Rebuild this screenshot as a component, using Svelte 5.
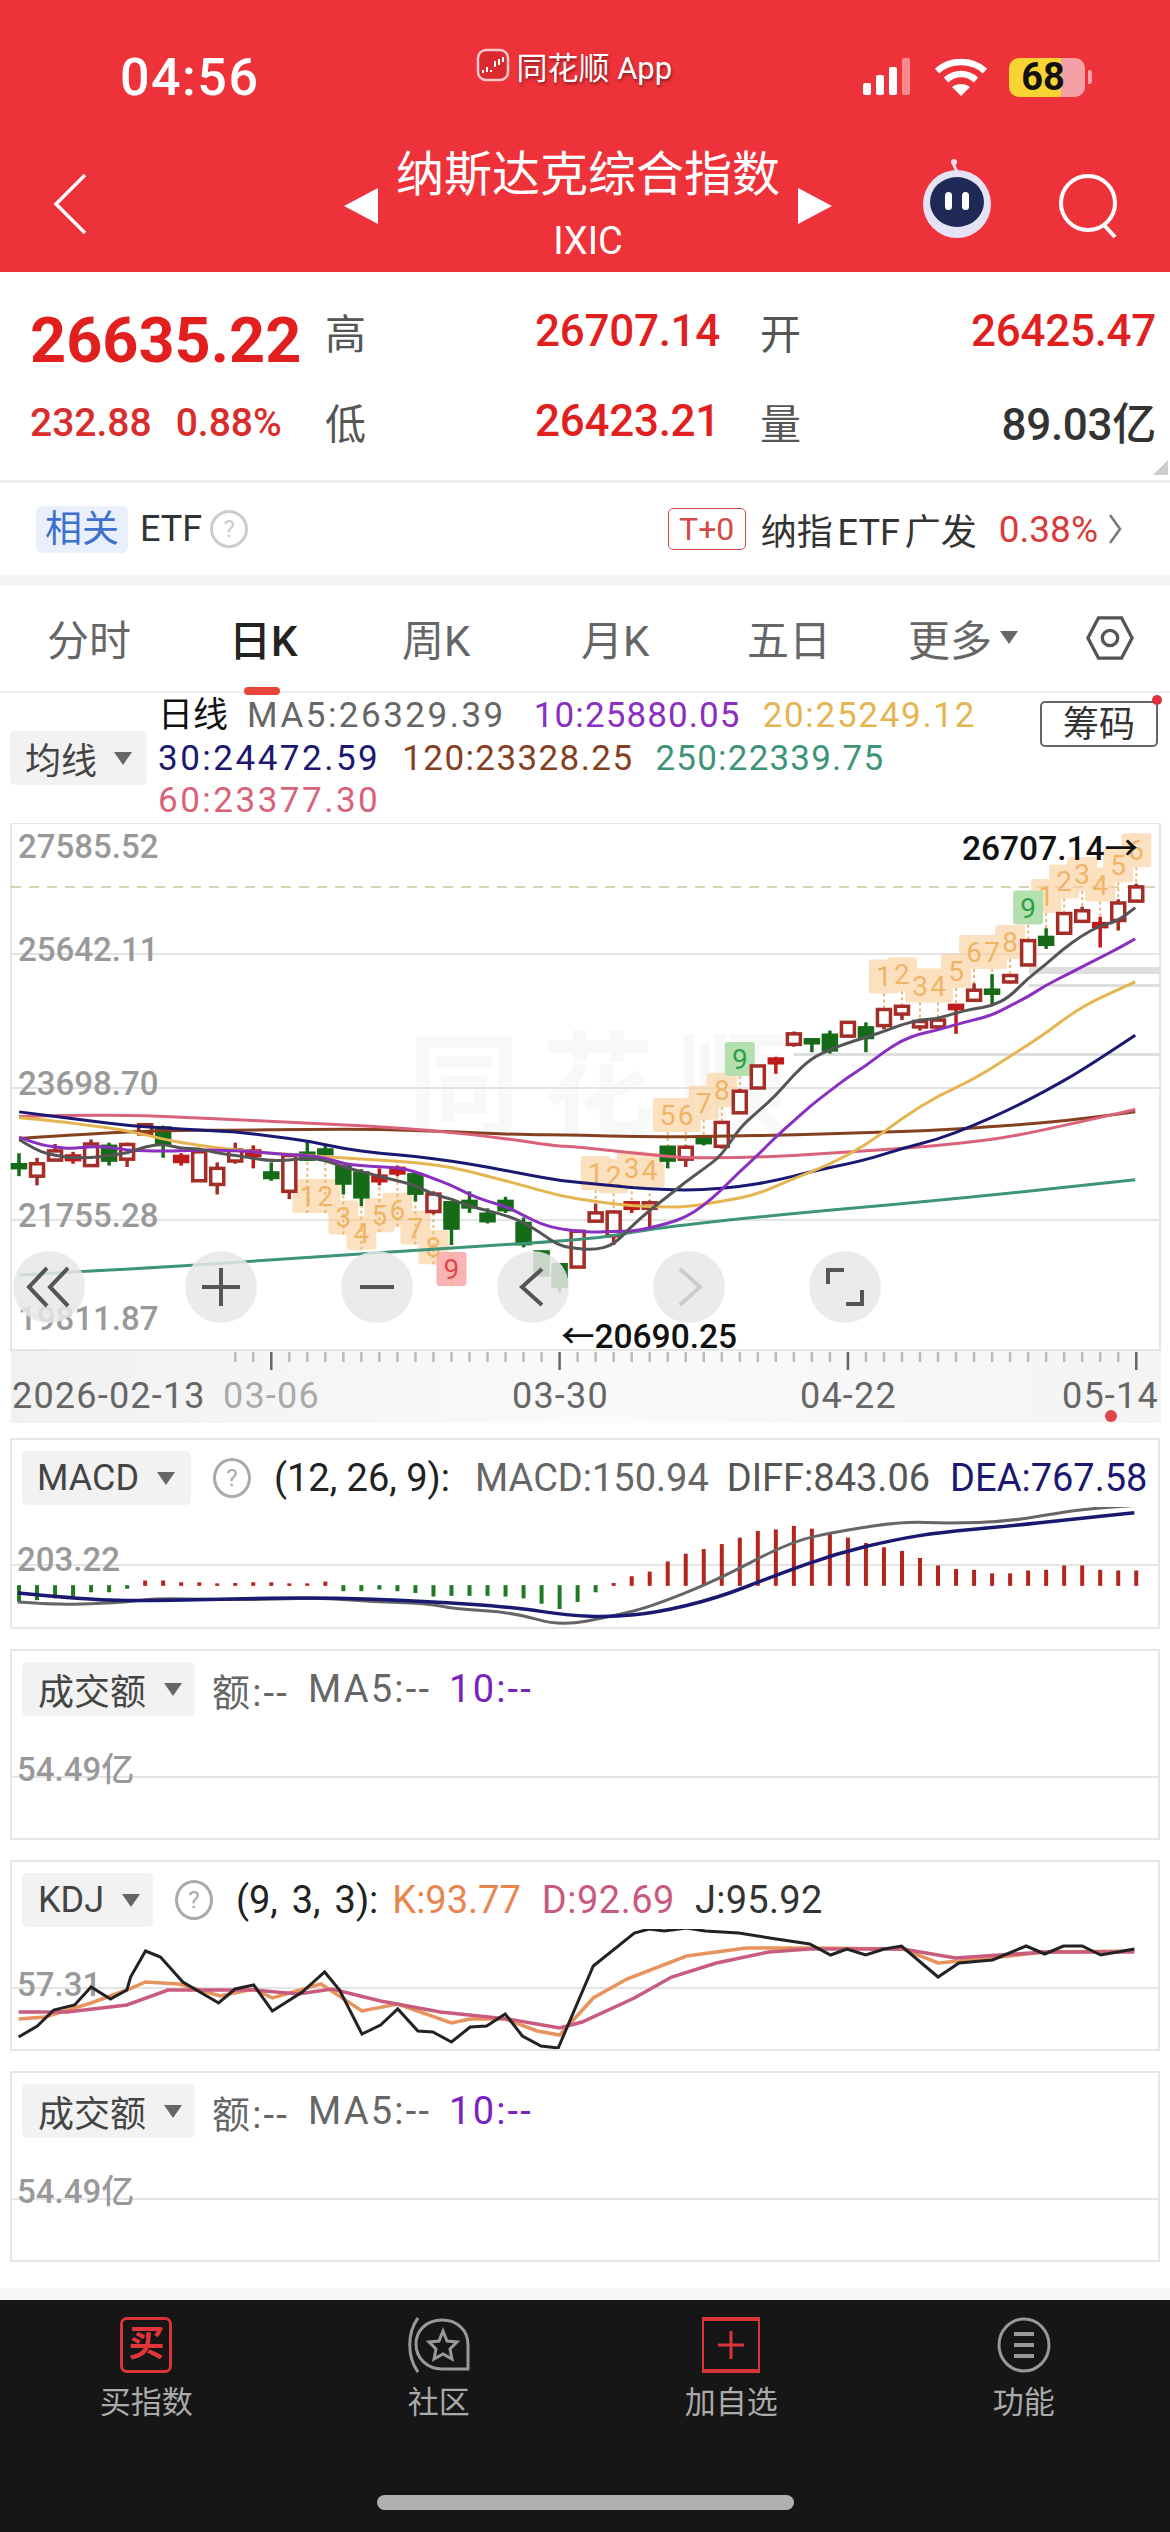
<script>
    // chart geometry was read off the reference; left/right are the two halves of the main chart
    const lx = (x) => x / 2.613;
    const rx = (x) => 570 + x / 2.613;
    const my = (y) => 680 + y / 2.178;
    const cx = (i) => 19 + 18.02 * i;

    function smooth(points) {
        let d = `M${points[0][0]} ${points[0][1]}`;
        for (let i = 1; i < points.length - 1; i++) {
            const mx = (points[i][0] + points[i + 1][0]) / 2;
            const mz = (points[i][1] + points[i + 1][1]) / 2;
            d += ` Q${points[i][0]} ${points[i][1]} ${mx} ${mz}`;
        }
        const last = points[points.length - 1];
        return d + ` L${last[0]} ${last[1]}`;
    }

    const mainLine = (left, right) =>
        smooth([
            ...left.map(([x, y]) => [lx(x), my(y)]),
            ...right.map(([x, y]) => [rx(x), my(y)])
        ]);

    const candles = [
        ['g', 1035, 1060, 1066, 1085], ['r', 1045, 1058, 1085, 1105], ['r', 1015, 1030, 1050, 1052],
        ['s', 1032, 1041, 1049, 1058], ['r', 1005, 1015, 1062, 1065], ['g', 1012, 1020, 1050, 1062],
        ['r', 1012, 1016, 1048, 1065], ['r', 970, 973, 993, 995], ['g', 975, 980, 1015, 1045],
        ['s', 1035, 1042, 1053, 1062], ['r', 1030, 1032, 1095, 1097], ['r', 1055, 1068, 1103, 1125],
        ['r', 1012, 1028, 1052, 1058], ['s', 1018, 1030, 1040, 1068], ['g', 1055, 1078, 1088, 1095],
        ['r', 1035, 1040, 1118, 1135], ['g', 1010, 1035, 1048, 1052], ['g', 1015, 1028, 1036, 1052],
        ['g', 1062, 1065, 1100, 1125], ['g', 1070, 1078, 1130, 1150], ['s', 1068, 1085, 1095, 1105],
        ['s', 1062, 1068, 1078, 1085], ['g', 1078, 1082, 1122, 1140], ['r', 1118, 1124, 1162, 1168],
        ['g', 1143, 1143, 1198, 1235], ['g', 1118, 1140, 1152, 1165], ['g', 1155, 1168, 1182, 1188],
        ['g', 1130, 1140, 1158, 1165], ['g', 1175, 1188, 1232, 1240], ['g', 1250, 1250, 1300, 1305],
        ['g', 1275, 1278, 1325, 1338], ['r', 1205, 1205, 1283, 1285], ['r', 1145, 1165, 1183, 1186],
        ['r', 1160, 1163, 1215, 1235], ['s', 1140, 1143, 1155, 1165], ['r', 1138, 1143, 1155, 1200],
        ['g', 1020, 1022, 1050, 1068], ['r', 1018, 1022, 1048, 1065], ['g', 1000, 1003, 1012, 1018],
        ['r', 965, 968, 1020, 1025], ['r', 895, 900, 947, 950], ['r', 843, 845, 893, 895],
        ['s', 825, 830, 838, 862], ['r', 770, 775, 798, 803], ['g', 785, 788, 792, 815],
        ['g', 768, 778, 810, 818], ['r', 748, 750, 780, 783], ['g', 750, 762, 783, 815],
        ['r', 720, 722, 757, 765], ['r', 712, 715, 732, 745], ['r', 742, 748, 760, 768],
        ['r', 740, 745, 760, 768], ['s', 710, 713, 720, 775], ['r', 665, 680, 702, 705],
        ['g', 645, 680, 686, 710], ['r', 645, 648, 662, 665], ['r', 570, 572, 625, 628],
        ['g', 545, 565, 580, 590], ['r', 510, 513, 556, 558], ['r', 498, 507, 530, 532],
        ['s', 520, 535, 540, 587], ['r', 482, 490, 528, 550], ['r', 448, 455, 486, 488]
    ];

    const candleFill = { r: '#fff', s: '#c01a1a', g: '#156b18' };
    const candleStroke = { r: '#a52d27', s: '#c01a1a', g: '#156b18' };

    // TD sequence markers: index of the candle, digit, y
    const markers = [
        [16, 1, 1128], [17, 2, 1128], [18, 3, 1175], [19, 4, 1208], [20, 5, 1170], [21, 6, 1158], [22, 7, 1197], [23, 8, 1240], [24, 9, 1287, 'sell'],
        [32, 1, 1078], [33, 2, 1085], [34, 3, 1068], [35, 4, 1072], [36, 5, 952], [37, 6, 952], [38, 7, 925], [39, 8, 897], [40, 9, 830, 'buy'],
        [48, 1, 650], [49, 2, 645], [50, 3, 670], [51, 4, 670], [52, 5, 638], [53, 6, 597], [54, 7, 597], [55, 8, 575], [56, 9, 500, 'buy'],
        [57, 1, 475], [58, 2, 443], [59, 3, 427], [60, 4, 450], [61, 5, 408], [62, 6, 375]
    ];
    const plainMarkers = markers.filter((m) => !m[3]);
    const nineMarkers = markers.filter((m) => m[3]);
    const markerFill = { sell: '#f8b4b4', buy: '#b4e0b0' };
    const markerText = { sell: '#e0474c', buy: '#2f9e44' };

    const ma5 = mainLine(
        [[50, 1005], [97, 1030], [145, 1040], [190, 1045], [238, 1045], [285, 1040], [333, 1035], [380, 1020], [427, 1015], [473, 1025], [520, 1025], [568, 1035], [615, 1040], [708, 1052], [756, 1050], [803, 1045], [850, 1050], [897, 1065], [944, 1075], [991, 1085], [1038, 1095], [1085, 1105], [1132, 1125], [1180, 1135], [1226, 1150], [1273, 1160], [1320, 1170], [1367, 1185], [1415, 1210], [1462, 1237], [1509, 1243]],
        [[66, 1245], [113, 1235], [160, 1195], [207, 1160], [254, 1130], [301, 1098], [348, 1070], [396, 1040], [443, 980], [490, 945], [537, 910], [584, 865], [631, 828], [678, 810], [725, 795], [772, 783], [819, 770], [866, 755], [913, 745], [960, 742], [1007, 730], [1054, 720], [1101, 715], [1148, 695], [1195, 655], [1242, 625], [1289, 590], [1336, 562], [1383, 540], [1430, 530], [1477, 500]]
    );
    const ma10 = mainLine(
        [[50, 1000], [97, 1015], [145, 1022], [190, 1025], [238, 1020], [285, 1022], [333, 1028], [380, 1030], [427, 1030], [473, 1030], [520, 1028], [568, 1028], [615, 1030], [662, 1032], [708, 1035], [756, 1038], [803, 1040], [850, 1045], [897, 1058], [944, 1062], [991, 1065], [1038, 1066], [1085, 1075], [1132, 1090], [1180, 1105], [1226, 1125], [1273, 1140], [1320, 1150], [1367, 1170], [1415, 1190], [1462, 1200], [1509, 1205]],
        [[66, 1207], [113, 1205], [160, 1205], [207, 1198], [254, 1188], [301, 1175], [348, 1150], [396, 1115], [443, 1075], [490, 1040], [537, 1000], [584, 965], [631, 930], [678, 900], [725, 870], [772, 845], [819, 815], [866, 790], [913, 775], [960, 767], [1007, 755], [1054, 745], [1101, 735], [1148, 715], [1195, 695], [1242, 670], [1289, 650], [1336, 630], [1383, 610], [1430, 590], [1477, 568]]
    );
    const ma20 = mainLine(
        [[50, 958], [145, 965], [238, 975], [333, 985], [427, 1005], [520, 1018], [615, 1028], [708, 1035], [803, 1040], [897, 1045], [991, 1050], [1085, 1055], [1180, 1065], [1273, 1085], [1367, 1105], [1462, 1128]],
        [[66, 1140], [160, 1150], [254, 1152], [301, 1152], [396, 1140], [490, 1125], [584, 1090], [678, 1060], [772, 1018], [866, 960], [960, 910], [1054, 875], [1148, 825], [1242, 775], [1336, 715], [1477, 662]]
    );
    const ma30 = mainLine(
        [[50, 945], [145, 955], [238, 965], [333, 975], [427, 980], [520, 985], [615, 988], [708, 998], [803, 1008], [897, 1025], [991, 1035], [1085, 1042], [1180, 1052], [1273, 1065], [1367, 1080], [1462, 1095]],
        [[66, 1102], [160, 1110], [254, 1115], [348, 1115], [443, 1108], [537, 1095], [631, 1075], [772, 1050], [866, 1025], [960, 1005], [1054, 975], [1148, 940], [1242, 900], [1336, 855], [1477, 778]]
    );
    const ma60 = mainLine(
        [[50, 955], [190, 952], [380, 953], [570, 960], [756, 968], [944, 975], [1132, 985], [1320, 1003], [1462, 1020]],
        [[0, 1020], [113, 1030], [207, 1038], [301, 1045], [443, 1045], [584, 1040], [725, 1032], [866, 1025], [1007, 1015], [1148, 1000], [1289, 975], [1477, 940]]
    );
    const ma120 = mainLine(
        [[50, 1003], [238, 993], [427, 985], [615, 985], [803, 983], [991, 983], [1180, 988], [1367, 995]],
        [[0, 995], [207, 1000], [396, 998], [584, 995], [772, 990], [960, 985], [1148, 975], [1289, 965], [1477, 945]]
    );
    const ma250 = mainLine(
        [[50, 1300], [400, 1285], [800, 1262], [1200, 1240]],
        [[66, 1222], [207, 1200], [470, 1175], [1000, 1135], [1477, 1093]]
    );
    const maLines = [
        [ma250, '#3e9478'], [ma120, '#85401f'], [ma60, '#d9627a'], [ma30, '#1a1870'],
        [ma20, '#e5b552'], [ma10, '#8a2fc0'], [ma5, '#555']
    ];

    const ticks = Array.from({ length: 51 }, (_, n) => n + 12);
    const longTicks = [14, 30, 46, 62];

    // MACD: top of each bar, in the units of the crop (y / 2.8)
    const macdTops = [515, 510, 505, 500, 488, 488, 478, 455, 455, 460, 460, 463, 462, 460, 460, 463, 463, 458, 485, 485, 480, 485, 490, 500, 498, 498, 498, 500, 505, 520, 535, 515, 488, 462, 443, 430, 402, 380, 367, 353, 335, 316, 312, 302, 310, 325, 335, 350, 362, 372, 392, 413, 423, 425, 435, 435, 427, 425, 413, 413, 425, 427, 427];
    const my4 = (y) => 1420 + y / 2.8;
    const isUp = (i) => (i > 6 && i < 18) || i > 32;
    const mline = (list) => smooth(list.map(([x, y]) => [x / 1.34, my4(y)]));
    const diff = mline([[24, 515], [60, 520], [100, 522], [170, 515], [210, 505], [290, 508], [370, 508], [430, 503], [500, 515], [570, 518], [610, 535], [690, 545], [750, 583], [820, 555], [870, 530], [960, 455], [1060, 345], [1130, 315], [1210, 290], [1270, 295], [1350, 290], [1430, 262], [1470, 252], [1520, 245]]);
    const dea = mline([[24, 490], [100, 505], [170, 513], [290, 507], [430, 502], [570, 513], [690, 530], [760, 553], [820, 557], [880, 545], [960, 505], [1040, 440], [1120, 380], [1200, 340], [1260, 320], [1350, 303], [1430, 285], [1520, 265]]);

    const kdjLine = (list) => list.map(([x, y]) => `${x / 1.34},${y}`).join(' ');
    const jLine = kdjLine([[25, 2037], [50, 2026], [72, 2010], [100, 2005], [122, 1987], [148, 1999], [170, 1990], [175, 1977], [195, 1951], [215, 1957], [245, 1982], [293, 2003], [315, 1989], [340, 1985], [365, 2011], [405, 1992], [435, 1972], [455, 1990], [485, 2034], [510, 2025], [533, 2009], [560, 2031], [580, 2032], [605, 2042], [630, 2027], [652, 2026], [677, 2014], [700, 2036], [725, 2046], [748, 2048], [795, 1966], [850, 1933], [870, 1929], [890, 1931], [920, 1928], [945, 1931], [990, 1933], [1040, 1939], [1085, 1944], [1113, 1955], [1135, 1949], [1160, 1955], [1185, 1949], [1208, 1946], [1257, 1977], [1285, 1963], [1330, 1960], [1375, 1946], [1400, 1954], [1425, 1946], [1450, 1946], [1475, 1955], [1520, 1949]]);
    const kLine = kdjLine([[25, 2019], [60, 2017], [122, 2003], [170, 1990], [195, 1982], [240, 1984], [295, 1996], [340, 1989], [365, 1998], [430, 1984], [485, 2011], [533, 2004], [605, 2023], [630, 2019], [677, 2019], [720, 2031], [750, 2035], [795, 1998], [840, 1979], [920, 1956], [1000, 1948], [1085, 1948], [1210, 1949], [1257, 1963], [1330, 1958], [1400, 1952], [1520, 1951]]);
    const dLine = kdjLine([[25, 2012], [90, 2012], [170, 2005], [225, 1990], [270, 1990], [340, 1990], [400, 1994], [445, 1989], [510, 2001], [590, 2012], [680, 2019], [750, 2028], [780, 2022], [850, 1998], [900, 1977], [960, 1963], [1030, 1952], [1085, 1949], [1210, 1949], [1280, 1958], [1400, 1952], [1520, 1952]]);

    const tabs = ['分时', '日K', '周K', '月K', '五日'];
</script>

{#snippet help()}
    <span class="help">?</span>
{/snippet}

{#snippet chip(label, cls)}
    <div class="chip {cls}"><span>{label}</span><i class="tri"></i></div>
{/snippet}

{#snippet volumePanel(top)}
    <section class="panel vol">
        <div class="panel-head">
            {@render chip('成交额', 'chip-vol')}
            <span class="info vol-a">额:--</span>
            <span class="info vol-b">MA5:--</span>
            <span class="info vol-c">10:--</span>
        </div>
        <svg width="1150" height="110" viewBox="10 {top} 1150 110">
            <line x1="10" x2="1160" y1={top + 59} y2={top + 59} class="grid" />
            <text x="17" y={top + 63} class="axis">54.49亿</text>
        </svg>
    </section>
{/snippet}

<div class="page">
    <header class="top">
        <div class="status">
            <span class="time">04:56</span>
            <div class="app-name">
                <svg width="34" height="34" viewBox="0 0 34 34">
                    <rect x="2" y="2" width="30" height="30" rx="8" fill="#d92a30" stroke="#f7c9c9" stroke-width="2.5" />
                    <path d="M7 22v3M11 19v5M15 22v2M19 13v6M23 11v6M27 9v5" stroke="#fff" stroke-width="2" />
                </svg>
                <span>同花顺 App</span>
            </div>
            <div class="status-icons">
                <svg width="52" height="40" viewBox="0 0 52 40">
                    <rect x="0" y="26" width="8" height="12" rx="2" fill="#fff" />
                    <rect x="13" y="18" width="8" height="20" rx="2" fill="#fff" />
                    <rect x="26" y="10" width="8" height="28" rx="2" fill="#fff" />
                    <rect x="39" y="1" width="8" height="37" rx="2" fill="#f58a8e" />
                </svg>
                <svg class="wifi" width="52" height="40" viewBox="0 0 52 40">
                    <path d="M2 14C15 2 37 2 50 14" fill="none" stroke="#fff" stroke-width="6.5" />
                    <path d="M11 23C20 15 32 15 41 23" fill="none" stroke="#fff" stroke-width="6.5" />
                    <path d="M26 39L17 30C22 26 30 26 35 30Z" fill="#fff" />
                </svg>
                <div class="battery"><span>68</span></div>
                <i class="battery-cap"></i>
            </div>
        </div>
        <div class="nav">
            <svg class="back" width="36" height="62" viewBox="0 0 36 62">
                <path d="M33 2L4 31L33 60" fill="none" stroke="#fff" stroke-width="3.5" />
            </svg>
            <div class="title-wrap">
                <i class="arrow arrow-l"></i>
                <div class="title">
                    <div class="name">纳斯达克综合指数</div>
                    <div class="code">IXIC</div>
                </div>
                <i class="arrow arrow-r"></i>
            </div>
            <svg class="robot" width="76" height="82" viewBox="0 0 76 82">
                <path d="M38 14C36 8 33 6 35 3" fill="none" stroke="#eadff5" stroke-width="3" />
                <circle cx="35" cy="4" r="3" fill="#eadff5" />
                <circle cx="38" cy="46" r="34" fill="#e6e2f6" />
                <ellipse cx="38" cy="44" rx="27" ry="25" fill="#1e2a55" />
                <rect x="26" y="34" width="7" height="18" rx="3.5" fill="#fff" />
                <rect x="43" y="34" width="7" height="18" rx="3.5" fill="#fff" />
            </svg>
            <svg class="search" width="62" height="66" viewBox="0 0 62 66">
                <circle cx="31" cy="30" r="27" fill="none" stroke="#fff" stroke-width="4" />
                <path d="M47 52L58 64" stroke="#fff" stroke-width="4" />
            </svg>
        </div>
    </header>

    <section class="quote">
        <div class="last">
            <div class="price">26635.22</div>
            <div class="change"><span>232.88</span><span>0.88%</span></div>
        </div>
        <div class="stats">
            <span class="label">高</span><b class="value">26707.14</b>
            <span class="label l2">开</span><b class="value">26425.47</b>
            <span class="label">低</span><b class="value">26423.21</b>
            <span class="label l2">量</span><b class="value dark">89.03亿</b>
        </div>
        <i class="corner"></i>
    </section>

    <section class="etf">
        <span class="related">相关</span>
        <span class="etf-name">ETF</span>
        <span class="help etf-help">?</span>
        <span class="spring"></span>
        <span class="t0">T+0</span>
        <span class="fund">纳指 ETF 广发</span>
        <span class="fund-pct">0.38%</span>
        <svg width="14" height="32" viewBox="0 0 14 32">
            <path d="M2 2L12 16L2 30" fill="none" stroke="#777" stroke-width="2.5" />
        </svg>
    </section>

    <div class="band"></div>

    <nav class="tabs">
        {#each tabs as tab, i}
            <div class="tab" class:active={i === 1}>{tab}</div>
        {/each}
        <div class="tab more">更多<i class="tri"></i></div>
        <svg width="50" height="46" viewBox="0 0 50 46">
            <path d="M13 2H37L48 23L37 44H13L2 23Z" fill="none" stroke="#555" stroke-width="3.5" />
            <circle cx="25" cy="23" r="8" fill="none" stroke="#555" stroke-width="3.5" />
        </svg>
    </nav>

    <section class="legend">
        {@render chip('均线', 'chip-ma')}
        <div class="ma-rows">
            <div class="ma-row">
                <span class="day">日线</span>
                <span class="c-5">MA5:26329.39</span>
                <span class="c-10">10:25880.05</span>
                <span class="c-20">20:25249.12</span>
            </div>
            <div class="ma-row">
                <span class="c-30">30:24472.59</span>
                <span class="c-120">120:23328.25</span>
                <span class="c-250">250:22339.75</span>
            </div>
            <div class="ma-row">
                <span class="c-60">60:23377.30</span>
            </div>
        </div>
        <div class="chips-btn">筹码<i class="dot"></i></div>
    </section>

    <section class="main-chart">
        <svg width="1170" height="600" viewBox="0 825 1170 600">
            <defs>
                <linearGradient id="axisBg" x1="0" x2="1" y1="0" y2="0">
                    <stop offset="0" stop-color="#f1f1f1" />
                    <stop offset="0.5" stop-color="#fafafa" />
                    <stop offset="1" stop-color="#f4f4f4" />
                </linearGradient>
            </defs>
            <rect x="11" y="1352" width="1150" height="73" fill="url(#axisBg)" />
            <rect x="11" y="825" width="1149" height="527" fill="#fff" stroke="#e6e6e6" stroke-width="2" />
            <text x="408" y="1128" class="watermark">同花顺</text>

            <line x1="11" x2="1160" y1="956" y2="956" class="grid" />
            <line x1="11" x2="1160" y1="1090" y2="1090" class="grid" />
            <line x1="11" x2="1160" y1="1222" y2="1222" class="grid" />
            <line x1="11" x2="1160" y1="889" y2="889" class="dash" />
            <rect x="1029" y="969" width="131" height="7" fill="#dedede" />
            <rect x="1029" y="986" width="131" height="3" fill="#dedede" />
            <rect x="794" y="1055" width="366" height="3" fill="#dedede" />

            <text x="18" y="860" class="axis">27585.52</text>
            <text x="18" y="963" class="axis">25642.11</text>
            <text x="18" y="1097" class="axis">23698.70</text>
            <text x="18" y="1229" class="axis">21755.28</text>
            <text x="18" y="1332" class="axis">19811.87</text>

            <g opacity="0.62">
                {#each plainMarkers as [i, , y]}
                    <rect x={cx(i) - 15} y={my(y) - 17} width="30" height="34" rx="3" fill="#fbd09a" />
                {/each}
            </g>
            {#each nineMarkers as [i, , y, kind]}
                <rect x={cx(i) - 15} y={my(y) - 17} width="30" height="34" rx="3" fill={markerFill[kind]} />
            {/each}
            {#each markers as [i, digit, y, kind]}
                <line x1={cx(i)} x2={cx(i)} y1={my(y) + 17} y2={my(candles[i][1])} class="td-link" />
                <text x={cx(i)} y={my(y) + 10} class="td" fill={kind ? markerText[kind] : '#efb466'}>{digit}</text>
            {/each}

            {#each candles as [kind, hi, top, bottom, lo], i}
                <line x1={cx(i)} x2={cx(i)} y1={my(hi)} y2={my(lo)} stroke={candleStroke[kind]} stroke-width="3.5" />
                <rect x={cx(i) - 6.5} y={my(top)} width="13" height={Math.max(my(bottom) - my(top), 3)} fill={candleFill[kind]} stroke={candleStroke[kind]} stroke-width="3.5" />
            {/each}

            {#each maLines as [d, color]}
                <path {d} fill="none" stroke={color} stroke-width="3" />
            {/each}

            <text x="561" y="1350" class="mark">←20690.25</text>
            <text x="962" y="862" class="mark">26707.14→</text>

            {#each ticks as i}
                <line x1={cx(i)} x2={cx(i)} y1="1354" y2={longTicks.includes(i) ? 1372 : 1364} stroke={longTicks.includes(i) ? '#666' : '#bbb'} stroke-width="2.5" />
            {/each}
            <text x="12" y="1410" class="date">2026-02-13</text>
            <text x="223" y="1410" class="date faint">03-06</text>
            <text x="512" y="1410" class="date">03-30</text>
            <text x="800" y="1410" class="date">04-22</text>
            <text x="1062" y="1410" class="date">05-14</text>
            <circle cx="1111" cy="1418" r="6" fill="#e0474c" />
        </svg>

        <div class="controls">
            <button class="ctl" aria-label="快退">
                <svg width="46" height="46" viewBox="0 0 46 46"><path d="M21 4L3 23L21 42M42 4L24 23L42 42" fill="none" stroke="#555" stroke-width="4" /></svg>
            </button>
            <button class="ctl" aria-label="放大">
                <svg width="46" height="46" viewBox="0 0 46 46"><path d="M23 4V42M4 23H42" fill="none" stroke="#555" stroke-width="4" /></svg>
            </button>
            <button class="ctl" aria-label="缩小">
                <svg width="46" height="46" viewBox="0 0 46 46"><path d="M6 23H40" fill="none" stroke="#555" stroke-width="4" /></svg>
            </button>
            <button class="ctl" aria-label="左移">
                <svg width="46" height="46" viewBox="0 0 46 46"><path d="M32 5L12 23L32 41" fill="none" stroke="#555" stroke-width="4" /></svg>
            </button>
            <button class="ctl" aria-label="右移">
                <svg width="46" height="46" viewBox="0 0 46 46"><path d="M14 5L34 23L14 41" fill="none" stroke="#ccc" stroke-width="4" /></svg>
            </button>
            <button class="ctl" aria-label="全屏">
                <svg width="46" height="46" viewBox="0 0 46 46"><path d="M22 6H6V20M24 40H40V26" fill="none" stroke="#555" stroke-width="4" /></svg>
            </button>
        </div>
    </section>

    <section class="panel macd">
        <div class="panel-head">
            {@render chip('MACD', 'chip-macd')}
            {@render help()}
            <span class="info params">(12, 26, 9):</span>
            <span class="info m-a">MACD:150.94</span>
            <span class="info m-b">DIFF:843.06</span>
            <span class="info m-c">DEA:767.58</span>
        </div>
        <svg width="1150" height="122" viewBox="10 1509 1150 122">
            <line x1="10" x2="1160" y1="1567" y2="1567" class="grid" />
            <text x="17" y="1573" class="axis">203.22</text>
            {#each macdTops as top, i}
                <line x1={cx(i)} x2={cx(i)} y1={isUp(i) ? my4(top) : my4(468)} y2={isUp(i) ? my4(470) : my4(top)} stroke={isUp(i) ? '#b3261e' : '#1f7a22'} stroke-width="4" />
            {/each}
            <path d={diff} fill="none" stroke="#666" stroke-width="3" />
            <path d={dea} fill="none" stroke="#1a1870" stroke-width="3.5" />
        </svg>
    </section>

    {@render volumePanel(1730)}

    <section class="panel kdj">
        <div class="panel-head">
            {@render chip('KDJ', 'chip-kdj')}
            {@render help()}
            <span class="info params">(9, 3, 3):</span>
            <span class="info k">K:93.77</span>
            <span class="info d">D:92.69</span>
            <span class="info j">J:95.92</span>
        </div>
        <svg width="1150" height="122" viewBox="10 1929 1150 122">
            <line x1="10" x2="1160" y1="1988" y2="1988" class="grid" />
            <text x="17" y="1996" class="axis">57.31</text>
            <polyline points={kLine} fill="none" stroke="#e8925e" stroke-width="3.5" />
            <polyline points={dLine} fill="none" stroke="#c95c7c" stroke-width="3.5" />
            <polyline points={jLine} fill="none" stroke="#222" stroke-width="3" />
        </svg>
    </section>

    {@render volumePanel(2150)}

    <div class="band low"></div>

    <footer class="dock">
        <div class="dock-tabs">
            <div class="dock-item">
                <div class="buy-icon"><span>买</span></div>
                <span>买指数</span>
            </div>
            <div class="dock-item">
                <svg width="62" height="56" viewBox="0 0 62 56">
                    <path d="M10 1C-1 16 -1 40 10 55" fill="none" stroke="#999" stroke-width="3" />
                    <path d="M34 3C18 3 8 14 8 27C8 42 20 52 34 52H60V28C60 13 49 3 34 3Z" fill="none" stroke="#999" stroke-width="3" />
                    <path d="M35 14L39 24L49 25L42 32L44 42L35 37L26 42L28 32L21 25L31 24Z" fill="none" stroke="#999" stroke-width="3" />
                </svg>
                <span>社区</span>
            </div>
            <div class="dock-item">
                <div class="add-icon">
                    <svg width="30" height="32" viewBox="0 0 30 32"><path d="M15 2V30M2 16H28" fill="none" stroke="#d8343a" stroke-width="3" /></svg>
                </div>
                <span>加自选</span>
            </div>
            <div class="dock-item">
                <svg width="56" height="56" viewBox="0 0 56 56">
                    <ellipse cx="28" cy="28" rx="25" ry="26" fill="none" stroke="#999" stroke-width="3" />
                    <path d="M18 17H38M18 28H38M18 39H38" fill="none" stroke="#999" stroke-width="4" />
                </svg>
                <span>功能</span>
            </div>
        </div>
        <div class="home-bar"></div>
    </footer>
</div>

<style>
    :global(body) {
        margin: 0;
        background: #fff;
    }

    .page {
        width: 1170px;
        height: 2532px;
        overflow: hidden;
        display: flex;
        flex-direction: column;
        font-family: Roboto, "Noto Sans CJK SC", sans-serif;
        color: #333;
    }

    .top {
        height: 272px;
        flex: none;
        background: #ee3239;
        color: #fff;
    }

    .status {
        height: 120px;
        display: flex;
        align-items: center;
        position: relative;
        padding: 34px 0 0 120px;
        box-sizing: border-box;
    }

    .time {
        font-size: 52px;
        font-weight: 500;
        letter-spacing: 1.5px;
    }

    .app-name {
        display: flex;
        align-items: center;
        gap: 6px;
        margin: -24px 0 0 217px;
        font-size: 31px;
        text-shadow: 1px 2px 3px rgba(0, 0, 0, 0.45);
    }

    .status-icons {
        display: flex;
        align-items: center;
        margin-left: 191px;
        gap: 6px;
    }

    .wifi {
        margin-left: 14px;
    }

    .battery {
        width: 76px;
        height: 39px;
        margin-left: 16px;
        border-radius: 10px;
        background: linear-gradient(90deg, #f8d432 68%, #f4a0a5 68%);
        color: #111;
        font-size: 38px;
        font-weight: 700;
        line-height: 39px;
        padding-left: 12px;
        box-sizing: border-box;
    }

    .battery-cap {
        width: 4px;
        height: 14px;
        margin-left: -3px;
        background: #f4a0a5;
        border-radius: 0 3px 3px 0;
    }

    .nav {
        height: 152px;
        display: flex;
        align-items: center;
        position: relative;
        box-sizing: border-box;
        padding-top: 20px;
    }

    .back {
        margin: -4px 0 0 52px;
    }

    .title-wrap {
        display: flex;
        align-items: center;
        margin-left: 256px;
        gap: 15px;
    }

    .title {
        text-align: center;
        width: 390px;
    }

    .name {
        font-size: 48px;
        line-height: 56px;
        margin-top: -2px;
    }

    .code {
        font-size: 38px;
        line-height: 44px;
        margin-top: 16px;
    }

    .arrow {
        width: 0;
        height: 0;
        border-top: 18px solid transparent;
        border-bottom: 18px solid transparent;
    }

    .arrow-l {
        border-right: 34px solid #fff;
    }

    .arrow-r {
        border-left: 34px solid #fff;
    }

    .robot {
        margin: -14px 0 0 87px;
    }

    .search {
        margin: 0 0 0 62px;
    }

    .quote {
        height: 211px;
        flex: none;
        display: flex;
        border-bottom: 3px solid #eee;
        box-sizing: border-box;
        padding-left: 30px;
        position: relative;
    }

    .last {
        width: 295px;
        color: #e21f1f;
    }

    .price {
        font-size: 63px;
        font-weight: 700;
        line-height: 76px;
        margin-top: 31px;
    }

    .change {
        display: flex;
        gap: 24px;
        font-size: 39px;
        font-weight: 500;
        line-height: 46px;
        margin-top: 21px;
        color: #d92c2c;
    }

    .stats {
        display: grid;
        grid-template-columns: 60px 335px 40px 60px 336px;
        grid-template-rows: 90px 90px;
        align-items: center;
        padding-top: 14px;
        align-content: start;
    }

    .stats .label {
        font-size: 41px;
        color: #555;
    }

    .stats .l2 {
        grid-column: 4;
    }

    .value {
        font-size: 44px;
        font-weight: 500;
        text-align: right;
        color: #e21f1f;
        letter-spacing: -0.3px;
    }

    .value.dark {
        color: #333;
    }

    .corner {
        position: absolute;
        right: 2px;
        bottom: 5px;
        border-left: 15px solid transparent;
        border-bottom: 15px solid #ccc;
    }

    .etf {
        height: 92px;
        flex: none;
        display: flex;
        align-items: center;
        padding: 0 48px 0 36px;
        font-size: 36px;
        box-sizing: border-box;
    }

    .related {
        width: 92px;
        height: 47px;
        line-height: 47px;
        text-align: center;
        background: #e9effb;
        color: #3d70cf;
        border-radius: 6px;
        font-size: 37px;
    }

    .etf-name {
        margin-left: 12px;
    }

    .help {
        width: 32px;
        height: 32px;
        border: 3px solid #aaa;
        border-radius: 50%;
        color: #aaa;
        font-size: 24px;
        line-height: 32px;
        text-align: center;
        flex: none;
    }

    .etf-help {
        margin-left: 8px;
        border-color: #ccc;
        color: #ccc;
    }

    .spring {
        flex: 1;
    }

    .t0 {
        width: 76px;
        height: 40px;
        line-height: 40px;
        text-align: center;
        border: 1.5px solid #d04a4a;
        border-radius: 5px;
        color: #d04a4a;
        font-size: 32px;
    }

    .fund {
        margin-left: 15px;
        word-spacing: -4px;
    }

    .fund-pct {
        margin: 0 10px 0 22px;
        color: #d93a3a;
        font-size: 37px;
    }

    .band {
        height: 11px;
        flex: none;
        background: #f5f5f5;
    }

    .tabs {
        height: 107px;
        flex: none;
        box-sizing: border-box;
        display: flex;
        align-items: center;
        position: relative;
        border-bottom: 2px solid #eee;
        padding: 0 36px 2px 47px;
        font-size: 42px;
        color: #666;
    }

    .tab {
        flex: none;
        width: 173px;
        white-space: nowrap;
    }

    .tab:nth-child(1) {
        width: 182px;
    }

    .tab:nth-child(3) {
        width: 179px;
    }

    .tab:nth-child(4) {
        width: 166px;
    }

    .tab:nth-child(5) {
        width: 161px;
    }

    .tab.active {
        color: #222;
        font-weight: 500;
        position: relative;
    }

    .tab.active::after {
        content: "";
        position: absolute;
        left: 15px;
        bottom: -27px;
        width: 36px;
        height: 8px;
        border-radius: 4px;
        background: #e8453c;
    }

    .more {
        width: 178px;
        display: flex;
        align-items: center;
        gap: 8px;
    }

    .tri {
        display: inline-block;
        width: 0;
        height: 0;
        border-left: 9px solid transparent;
        border-right: 9px solid transparent;
        border-top: 13px solid #666;
    }

    .legend {
        height: 130px;
        flex: none;
        display: flex;
        position: relative;
    }

    .chip {
        height: 54px;
        background: #f2f2f2;
        border-radius: 5px;
        display: flex;
        align-items: center;
        box-sizing: border-box;
        font-size: 36px;
        color: #444;
        flex: none;
    }

    .chip-ma {
        width: 137px;
        margin: 38px 0 0 10px;
        padding-left: 15px;
        gap: 17px;
    }

    .ma-rows {
        margin-left: 11px;
        font-size: 35px;
        letter-spacing: 2.5px;
        line-height: 42.5px;
        padding-top: 2px;
        white-space: nowrap;
    }

    .ma-row {
        display: flex;
        gap: 22px;
    }

    .day {
        color: #111;
        letter-spacing: 0;
        font-size: 35px;
    }

    .c-5 { color: #666; margin-left: -3px; }
    .c-10 { color: #8a2fc0; letter-spacing: 1.1px; margin-left: 6px; }
    .c-20 { color: #e5b552; letter-spacing: 1.7px; }
    .c-30 { color: #1a1870; }
    .c-120 { color: #85401f; letter-spacing: 1.4px; }
    .c-250 { color: #3e9478; letter-spacing: 1.2px; }
    .c-60 { color: #d9627a; }

    .chips-btn {
        position: absolute;
        left: 1040px;
        top: 8px;
        width: 118px;
        height: 46px;
        line-height: 44px;
        box-sizing: border-box;
        border: 2px solid #666;
        border-radius: 5px;
        text-align: center;
        font-size: 36px;
        color: #333;
    }

    .dot {
        position: absolute;
        right: -6px;
        top: -8px;
        width: 10px;
        height: 10px;
        border-radius: 50%;
        background: #e0303a;
    }

    .main-chart {
        height: 615px;
        flex: none;
        position: relative;
    }

    .main-chart svg {
        display: block;
    }

    .grid {
        stroke: #e4e4e4;
        stroke-width: 2;
    }

    .dash {
        stroke: #c9c39b;
        stroke-width: 1.5;
        stroke-dasharray: 10 8;
    }

    .axis {
        font-size: 33px;
        fill: #999;
        font-weight: 500;
    }

    .watermark {
        font-size: 112px;
        letter-spacing: 22px;
        fill: #f8f8f8;
        font-weight: 700;
    }

    .td {
        font-size: 28px;
        text-anchor: middle;
    }

    .td-link {
        stroke: #e8b878;
        stroke-width: 2;
        stroke-dasharray: 3 3;
    }

    .mark {
        font-size: 33.5px;
        font-weight: 500;
        fill: #111;
    }

    .date {
        font-size: 36px;
        fill: #666;
        letter-spacing: 1.2px;
    }

    .date.faint {
        fill: #aaa;
    }

    .controls {
        position: absolute;
        left: 13px;
        top: 428px;
        display: flex;
        gap: 84px;
    }

    .ctl {
        width: 72px;
        height: 72px;
        padding: 0;
        border: none;
        border-radius: 50%;
        background: rgba(231, 231, 231, 0.85);
        display: flex;
        align-items: center;
        justify-content: center;
    }

    .ctl:first-child {
        margin-right: 16px;
    }

    .panel {
        flex: none;
        width: 1150px;
        margin: 0 0 20px 10px;
        height: 191px;
        box-sizing: border-box;
        border: 2px solid #e6e6e6;
        overflow: hidden;
    }

    .panel svg {
        display: block;
        margin: 0 -2px;
    }

    .panel-head {
        height: 67px;
        display: flex;
        align-items: center;
        padding: 9px 0 0 10px;
        box-sizing: border-box;
        font-size: 36px;
    }

    .panel-head .chip {
        height: 54px;
    }

    .chip-macd {
        width: 169px;
        padding-left: 15px;
        gap: 18px;
    }

    .chip-vol {
        width: 173px;
        padding-left: 16px;
        gap: 18px;
    }

    .chip-kdj {
        width: 131px;
        padding-left: 16px;
        gap: 18px;
    }

    .panel-head .help {
        margin-left: 22px;
        height: 34px;
        line-height: 34px;
    }

    .info {
        color: #666;
        font-size: 38px;
        white-space: nowrap;
    }

    .params {
        color: #222;
        margin: 0 25px 0 23px;
    }

    .kdj .params {
        margin-right: 14px;
        word-spacing: 4.5px;
    }

    .m-b {
        margin-left: 18px;
        color: #555;
    }

    .m-c {
        margin-left: 20px;
        color: #1a1870;
    }

    .vol .info {
        letter-spacing: 2.2px;
    }

    .vol-a {
        margin-left: 17px;
    }

    .vol-b {
        margin-left: 19px;
    }

    .vol-c {
        margin-left: 18px;
        color: #7a22c0;
    }

    .kdj .k {
        color: #e8854f;
    }

    .kdj .d {
        margin-left: 21px;
        letter-spacing: 0.5px;
        color: #c85a80;
    }

    .kdj .j {
        margin-left: 20px;
        letter-spacing: 0.3px;
        color: #333;
    }

    .band.low {
        margin-top: 6px;
        height: 12px;
        background: #f7f7f7;
    }

    .dock {
        flex: none;
        height: 234px;
        background: #161616;
        color: #aaa;
        position: relative;
    }

    .dock-tabs {
        display: flex;
        padding-top: 17px;
    }

    .dock-item {
        flex: 1;
        display: flex;
        flex-direction: column;
        align-items: center;
        gap: 10px;
        font-size: 31px;
        line-height: 40px;
    }

    .dock-item > :first-child {
        height: 56px;
        box-sizing: border-box;
    }

    .buy-icon {
        width: 52px;
        border: 3px solid #d8343a;
        border-radius: 7px;
        color: #e0353a;
        font-size: 36px;
        line-height: 48px;
        font-weight: 700;
        text-align: center;
    }

    .add-icon {
        width: 58px;
        border: solid #d8343a;
        border-width: 4px 2px;
        display: flex;
        align-items: center;
        justify-content: center;
    }

    .home-bar {
        position: absolute;
        left: 377px;
        top: 195px;
        width: 417px;
        height: 15px;
        border-radius: 8px;
        background: #b0b0b0;
    }
</style>
